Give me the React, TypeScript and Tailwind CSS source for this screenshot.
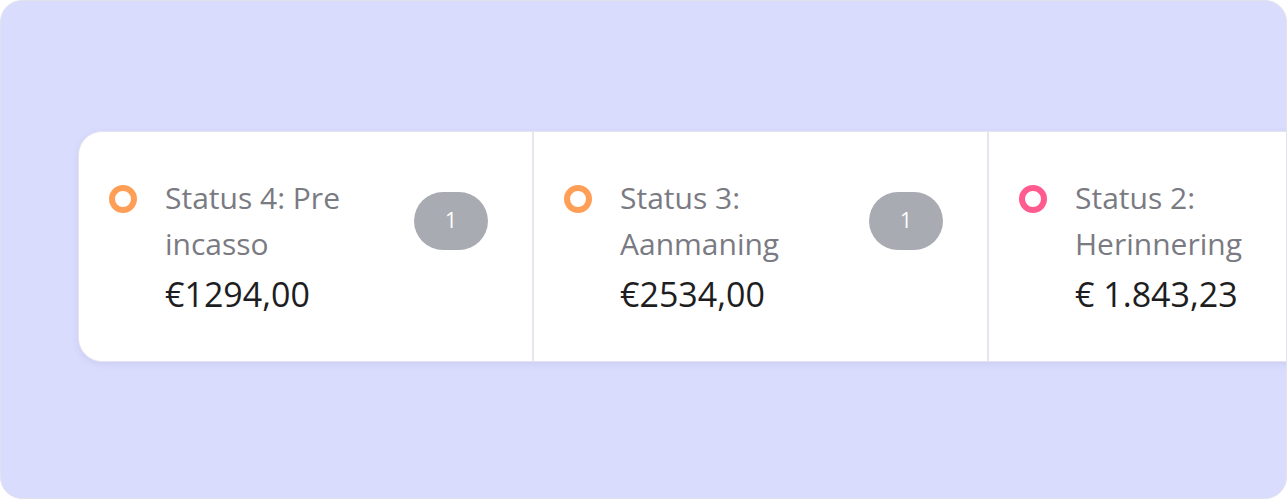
import React from "react";

type Item = {
  title: string;
  amount: string;
  count?: number;
  ring: string;
};

const items: Item[] = [
  { title: "Status 4: Pre incasso", amount: "€1294,00", count: 1, ring: "border-[#ff9f57]" },
  { title: "Status 3: Aanmaning", amount: "€2534,00", count: 1, ring: "border-[#ff9f57]" },
  { title: "Status 2: Herinnering", amount: "€ 1.843,23", ring: "border-[#ff5b8f]" },
];

const StatusColumn: React.FC<{ item: Item; last: boolean }> = ({ item, last }) => {
  return (
    <div
      className={`flex w-[455px] shrink-0 items-start pl-[30px] pr-[44px] pt-[43px] pb-[42px] ${
        last ? "" : "border-r-2 border-[#e6e6ee]"
      }`}
    >
      <div className={`mt-[10px] h-[28px] w-[28px] shrink-0 rounded-full border-[6px] ${item.ring}`} />
      <div className="ml-[28px] w-[230px]">
        <div className="text-[30px] leading-[46px] text-[#7a7a82]">{item.title}</div>
        <div className="mt-[2px] text-[34px] leading-[50px] text-[#1e1e22]">{item.amount}</div>
      </div>
      {item.count !== undefined && (
        <div className="ml-auto mt-[17px] flex h-[58px] w-[74px] items-center justify-center rounded-full bg-[#a9abb3] text-[21px] text-white">
          {item.count}
        </div>
      )}
    </div>
  );
};

export default function App() {
  return (
    <div
      className="h-[500px] w-[1288px] bg-white"
      style={{ fontFamily: '"Open Sans", "Noto Sans", sans-serif' }}
    >
      <div className="h-[499px] w-[1287px] overflow-hidden rounded-[22px] border border-[#e2e2ec] bg-[#dadcfe] pt-[130px] pl-[77px]">
        <div className="flex w-[1400px] overflow-hidden rounded-l-[24px] border border-[#e4e4f0] bg-white shadow-[0_2px_6px_rgba(120,120,170,0.15)]">
          {items.map((item, i) => (
            <StatusColumn key={item.title} item={item} last={i === items.length - 1} />
          ))}
        </div>
      </div>
    </div>
  );
}
